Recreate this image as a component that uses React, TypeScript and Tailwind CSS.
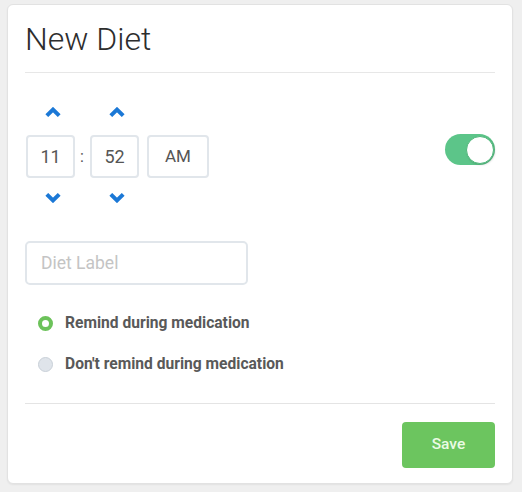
import React from "react";

function ChevronUp() {
  return (
    <svg width="16" height="10" viewBox="0 0 16 10" className="block">
      <polyline points="1.8,8.6 8,2.6 14.2,8.6" fill="none" stroke="#1b78d6" strokeWidth="4" strokeLinecap="butt" strokeLinejoin="miter" />
    </svg>
  );
}
function ChevronDown() {
  return (
    <svg width="16" height="10" viewBox="0 0 16 10" className="block">
      <polyline points="1.8,1.4 8,7.4 14.2,1.4" fill="none" stroke="#1b78d6" strokeWidth="4" strokeLinecap="butt" strokeLinejoin="miter" />
    </svg>
  );
}

export default function App() {
  return (
    <div
      className="w-[522px] h-[492px] bg-[#efefef] pt-[4px] pl-[7px]"
      style={{ fontFamily: "Roboto, 'Liberation Sans', sans-serif" }}
    >
      <div className="w-[506px] h-[480px] bg-white rounded-[6px] border border-[#e2e2e2] shadow-[0_1px_2px_rgba(0,0,0,0.06)] px-[17px] pt-[15px] flex flex-col">
        <div className="border-b border-[#e7e7e7] pb-[14px]">
          <h1 className="text-[32px] leading-[38px] font-light text-[#2d2d2d]">New Diet</h1>
        </div>

        <div className="mt-[34px] flex items-start justify-between">
          <div className="flex flex-col pl-[1px]">
            <div className="flex items-center">
              <div className="w-[49px] flex justify-center pl-[4px]"><ChevronUp /></div>
              <div className="w-[15px]" />
              <div className="w-[49px] flex justify-center pl-[4px]"><ChevronUp /></div>
            </div>
            <div className="flex items-center mt-[18px] text-[18px] text-[#555]">
              <div className="w-[49px] h-[43px] border-2 border-[#e1e6eb] rounded-[4px] flex items-center justify-center">11</div>
              <div className="w-[15px] text-center text-[16px] leading-none pr-[1px]">:</div>
              <div className="w-[49px] h-[43px] border-2 border-[#e1e6eb] rounded-[4px] flex items-center justify-center">52</div>
              <div className="ml-[8px] w-[62px] h-[43px] border-2 border-[#e1e6eb] rounded-[4px] flex items-center justify-center text-[17px]">AM</div>
            </div>
            <div className="flex items-center mt-[15px]">
              <div className="w-[49px] flex justify-center pl-[4px]"><ChevronDown /></div>
              <div className="w-[15px]" />
              <div className="w-[49px] flex justify-center pl-[4px]"><ChevronDown /></div>
            </div>
          </div>
          <div className="mt-[27px] w-[50px] h-[31px] rounded-full bg-[#5cc589] relative">
            <div className="absolute right-[1px] top-[1.5px] w-[28px] h-[28px] rounded-full bg-white border border-[#4fb87b] shadow-[1px_1px_2px_rgba(0,0,0,0.15)]" />
          </div>
        </div>

        <div className="mt-[38px] w-[223px] h-[44px] border-2 border-[#e1e6eb] rounded-[5px] flex items-center px-[14px] pt-[1px] text-[17.5px] text-[#c4c4c4]">
          Diet Label
        </div>

        <div className="mt-[31px] flex flex-col gap-[26px] pl-[13px]">
          <div className="flex items-center gap-[12px]">
            <div className="w-[15px] h-[15px] rounded-full border-[4px] border-[#6cc25a] bg-white" />
            <span className="text-[15.6px] leading-[15px] font-bold text-[#595959]">Remind during medication</span>
          </div>
          <div className="flex items-center gap-[12px]">
            <div className="w-[15px] h-[15px] rounded-full border border-[#c9d0d8] bg-[#dfe4ea]" />
            <span className="text-[15.6px] leading-[15px] font-bold text-[#595959]">Don't remind during medication</span>
          </div>
        </div>

        <div className="mt-[31px] border-t border-[#e4e4e4]" />

        <div className="flex justify-end mt-[18px]">
          <button className="w-[93px] h-[46px] rounded-[4px] bg-[#6cc55f] text-[#eafbe4] text-[15.5px] font-medium">Save</button>
        </div>
      </div>
    </div>
  );
}
